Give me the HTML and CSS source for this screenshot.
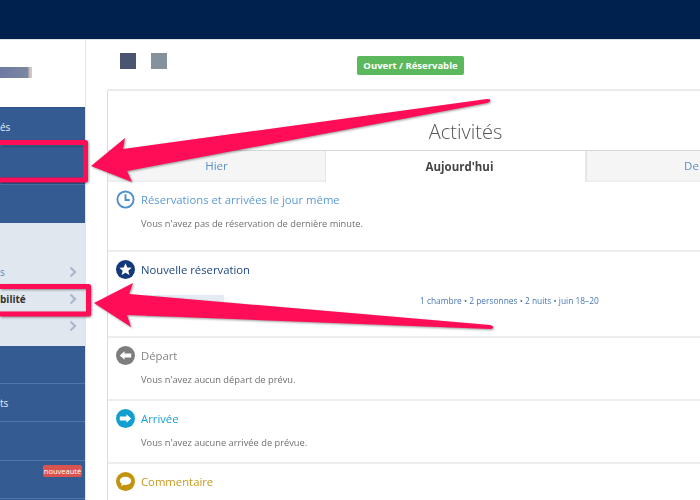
FILE: index.html
```html
<!DOCTYPE html>
<html lang="fr">
<head>
<meta charset="utf-8">
<title>Activités</title>
<link rel="stylesheet" href="styles.css">
</head>
<body>
<div class="page">
  <header class="topbar"></header>
  <div class="layout">
    <aside class="sidebar">
      <div class="logo-area"><div class="logo-bar"></div></div>
      <nav class="nav-blue nav-first">
        <div class="nav-row">és</div>
        <div class="nav-row"></div>
        <div class="nav-row"></div>
      </nav>
      <nav class="nav-light">
        <div class="light-row link">s<svg class="chev" viewBox="0 0 8 12"><path d="M1.5 1.5 6 6l-4.500 4.500"/></svg></div>
        <div class="light-row strong">bilité<svg class="chev" viewBox="0 0 8 12"><path d="M1.500 1.500 6 6l-4.500 4.500"/></svg></div>
        <div class="light-row"><svg class="chev" viewBox="0 0 8 12"><path d="M1.500 1.500 6 6l-4.500 4.500"/></svg></div>
      </nav>
      <nav class="nav-blue">
        <div class="nav-row"></div>
        <div class="nav-row">ts</div>
        <div class="nav-row"></div>
        <div class="nav-row nav-badge"><span class="badge-new">nouveauté</span></div>
        <div class="nav-row"></div>
      </nav>
    </aside>
    <main class="content">
      <div class="toolbar">
        <div class="tools"><span class="sq sq-dark"></span><span class="sq sq-grey"></span></div>
        <span class="status">Ouvert / Réservable</span>
      </div>
      <section class="panel">
        <h1 class="title">Activités</h1>
        <div class="tabs">
          <div class="tab">Hier</div>
          <div class="tab tab-active">Aujourd'hui</div>
          <div class="tab">Demain</div>
        </div>
        <div class="activity act-first">
          <div class="act-head c-clock">
            <svg class="ico" viewBox="0 0 20 20"><circle cx="10" cy="10" r="8.500" fill="#fff" stroke="#4f90cf" stroke-width="2"/><path d="M10 4.500V10.500H14.500" fill="none" stroke="#4f90cf" stroke-width="2"/></svg>
            <span>Réservations et arrivées le jour même</span>
          </div>
          <p class="act-text">Vous n'avez pas de réservation de dernière minute.</p>
        </div>
        <div class="activity act-new">
          <div class="act-head c-star">
            <svg class="ico" viewBox="0 0 20 20"><circle cx="10" cy="10" r="10" fill="#123a7a"/><path d="M10 3.500l1.900 4.300 4.600.4-3.500 3 1.100 4.600-4.100-2.400-4.100 2.400 1.100-4.600-3.500-3 4.600-.4z" fill="#fff"/></svg>
            <span>Nouvelle réservation</span>
          </div>
          <div class="booking"><span class="booking-blur"></span><span class="booking-info">1 chambre • 2 personnes • 2 nuits • juin 18–20</span></div>
        </div>
        <div class="activity">
          <div class="act-head c-dep">
            <svg class="ico" viewBox="0 0 20 20"><circle cx="10" cy="10" r="10" fill="#7d7d7d"/><path d="M4 10l5-4.500V8h7v4H9v2.500z" fill="#fff"/></svg>
            <span>Départ</span>
          </div>
          <p class="act-text">Vous n'avez aucun départ de prévu.</p>
        </div>
        <div class="activity">
          <div class="act-head c-arr">
            <svg class="ico" viewBox="0 0 20 20"><circle cx="10" cy="10" r="10" fill="#129fd0"/><path d="M16 10l-5-4.500V8H4v4h7v2.500z" fill="#fff"/></svg>
            <span>Arrivée</span>
          </div>
          <p class="act-text">Vous n'avez aucune arrivée de prévue.</p>
        </div>
        <div class="activity">
          <div class="act-head c-com">
            <svg class="ico" viewBox="0 0 20 20"><circle cx="10" cy="10" r="10" fill="#c4930e"/><path d="M10 5c3.600 0 6 1.900 6 4.300s-2.400 4.300-6 4.300c-.6 0-1.200 0-1.700-.2-.9.8-2 1.200-3.300 1.300.7-.6 1.100-1.300 1.200-2-1.300-.8-2.200-2-2.200-3.400C4 6.900 6.400 5 10 5z" fill="#fff"/></svg>
            <span>Commentaire</span>
          </div>
        </div>
      </section>
    </main>
  </div>
  <svg class="annotations" viewBox="0 0 700 500">
    <path class="box" d="M-6 142.500H85.500V180H-6"/>
    <path class="box" d="M-6 286.500H88.500V314H-6"/>
    <path class="arrow" d="M91 166 125 138 123 149 487 99Q491 99 490 101Q490 102 487 103L127 171 132 182Z"/>
    <path class="arrow" d="M94 303 133 283 129 294 490 325Q494 326 493 328Q492 329 490 329L127 315 131 327Z"/>
  </svg>
</div>
</body>
</html>
```
FILE: styles.css
```css
* { box-sizing: border-box; }
html, body { margin: 0; padding: 0; }
body {
  width: 700px;
  height: 500px;
  overflow: hidden;
  background: #fff;
  font-family: "Open Sans", "Liberation Sans", sans-serif;
}
.page {
  position: relative;
  width: 700px;
  height: 500px;
  overflow: hidden;
  filter: blur(0.35px);
}
.topbar {
  height: 40px;
  background: #00214e;
  border-bottom: 1px solid #dfe3e8;
}
.layout {
  display: flex;
  height: 460px;
}
.sidebar {
  flex: 0 0 86px;
  width: 86px;
  border-right: 1px solid #e3e3e3;
  overflow: hidden;
}
.logo-area {
  height: 67px;
  padding-top: 27px;
}
.logo-bar {
  width: 32px;
  height: 11px;
  background: linear-gradient(90deg, #6f79a3 0, #7a88a0 28px, #c9b8b5 29px, #d8ccc8 100%);
}
.nav-blue {
  background: #345c93;
  color: #e6ecf4;
  font-size: 10px;
}
.nav-first { border-top: 1px solid #2c5289; }
.nav-row {
  height: 38.300px;
  display: flex;
  align-items: center;
  border-bottom: 1px solid #5077aa;
}
.nav-first .nav-row:last-child { border-bottom: 0; }
.nav-badge {
  align-items: flex-start;
  justify-content: flex-end;
  padding: 4px 3px 0 0;
}
.badge-new {
  width: 39px;
  height: 12px;
  line-height: 12px;
  text-align: center;
  background: #d9534f;
  color: #fff;
  font-size: 7.500px;
  border-radius: 2px;
}
.nav-light {
  height: 123px;
  padding-top: 36px;
  background: #e1e7ef;
}
.light-row {
  height: 27px;
  padding-right: 8px;
  display: flex;
  align-items: center;
  font-size: 10px;
}
.link { color: #4f8ac4; }
.strong { color: #333; font-weight: 700; }
.chev {
  width: 8px;
  height: 12px;
  margin-left: auto;
  fill: none;
  stroke: #a9b8cf;
  stroke-width: 2.200;
}
.content {
  flex: 0 0 614px;
  padding-left: 21px;
  min-width: 0;
}
.toolbar {
  position: relative;
  width: 716px;
  height: 51px;
  border-bottom: 2px solid #ececec;
  padding: 13px 0 0 13px;
}
.tools { display: flex; gap: 15px; }
.sq { width: 16px; height: 16px; display: block; }
.sq-dark { background: #4a5570; }
.sq-grey { background: #84929e; }
.status {
  position: absolute;
  left: 250px;
  top: 16px;
  width: 107px;
  height: 19px;
  line-height: 19px;
  text-align: center;
  background: #5cb85c;
  border-radius: 2px;
  color: #fff;
  font-size: 9.500px;
  font-weight: 700;
}
.panel {
  width: 716px;
  border-left: 1px solid #dcdcdc;
}
.title {
  margin: 0;
  height: 59px;
  padding-top: 27px;
  text-align: center;
  font-size: 20px;
  line-height: 28px;
  font-weight: 300;
  color: #555;
}
.tabs {
  display: grid;
  grid-template-columns: 217px 262px 1fr;
  height: 32px;
  border-top: 1px solid #d8d8d8;
}
.tab {
  display: flex;
  align-items: center;
  justify-content: center;
  background: #f5f5f5;
  border-bottom: 2px solid #eee;
  color: #5b8ec6;
  font-size: 11.500px;
}
.tab-active {
  background: #fff;
  border-bottom: 0;
  border-left: 1px solid #e6e6e6;
  border-right: 2px solid #e6e6e6;
  color: #444;
  font-weight: 700;
  padding-left: 8px;
}
.activity {
  height: 63px;
  padding: 8px 0 0 8px;
  border-bottom: 2px solid #ededed;
}
.act-first {
  height: 69px;
  margin-top: 1px;
  padding-top: 7px;
}
.act-new { height: 86px; }
.act-head {
  display: flex;
  align-items: center;
  gap: 6px;
  height: 19px;
  font-size: 11.300px;
  white-space: nowrap;
}
.ico { width: 19px; height: 19px; flex: none; }
.act-text {
  margin: 8px 0 0 25px;
  font-size: 9.300px;
  line-height: 14px;
  color: #707070;
}
.c-clock { color: #5b9ad8; }
.c-star { color: #1d4684; }
.c-dep { color: #858585; }
.c-arr { color: #16a0d2; }
.c-com { color: #c9981f; }
.booking {
  display: flex;
  height: 22px;
  margin-top: 16px;
  padding-left: 30px;
  align-items: flex-start;
}
.booking-blur {
  width: 78px;
  height: 22px;
  background: #e5ebf2;
}
.booking-info {
  margin-left: 196px;
  font-size: 8.400px;
  line-height: 11px;
  color: #4878b4;
  white-space: nowrap;
}
.annotations {
  position: absolute;
  left: 0;
  top: 0;
  width: 700px;
  height: 500px;
  filter: drop-shadow(1px 1px 1px rgba(0,0,0,.4));
}
.box { fill: none; stroke: #ff0d57; stroke-width: 5; stroke-linejoin: round; }
.arrow { fill: #ff0d57; }
```
